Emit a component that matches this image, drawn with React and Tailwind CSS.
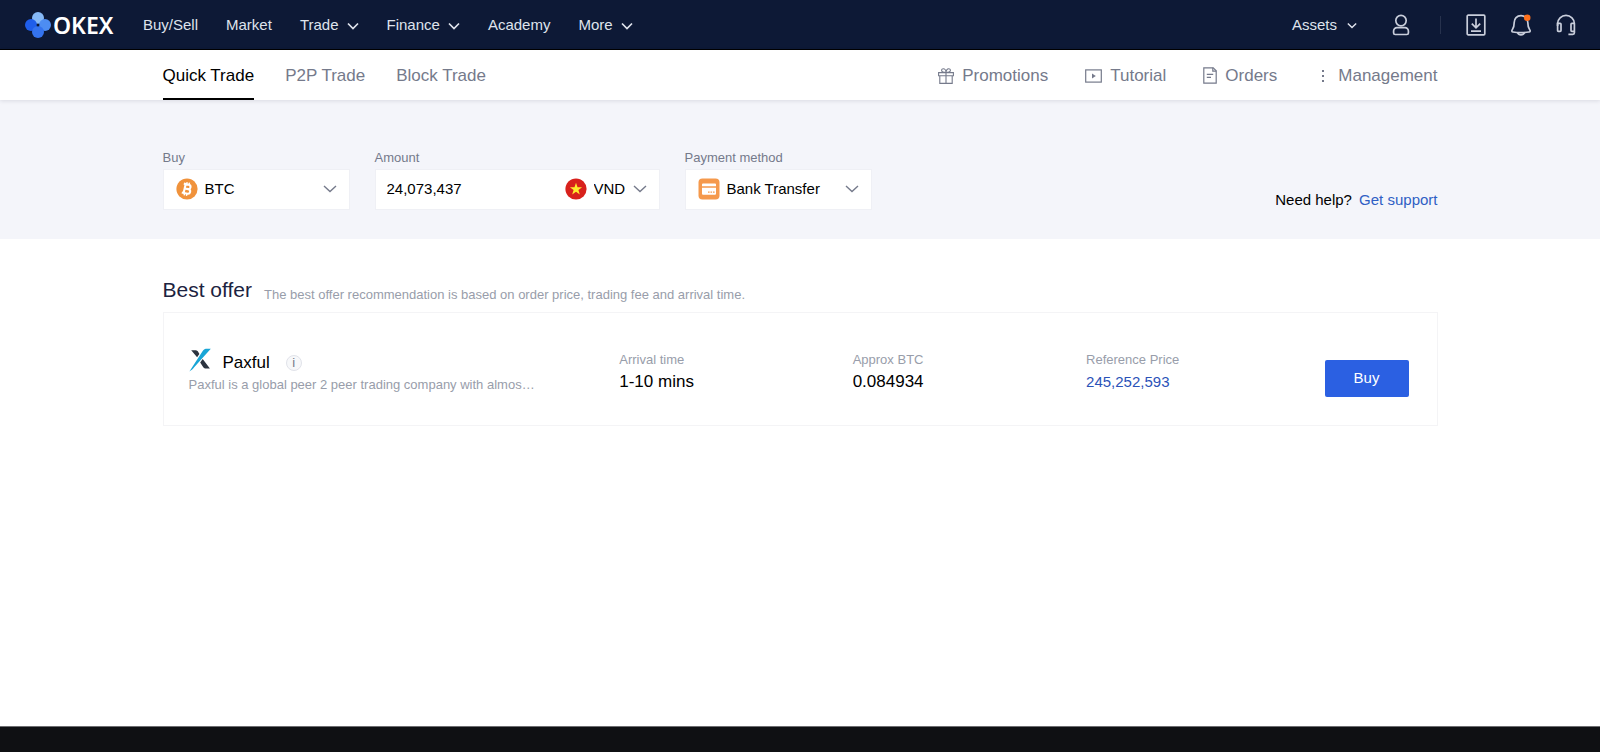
import { useState } from 'react'

const navLinks = [
  { label: 'Buy/Sell' },
  { label: 'Market' },
  { label: 'Trade', menu: true },
  { label: 'Finance', menu: true },
  { label: 'Academy' },
  { label: 'More', menu: true },
]

const tabs = ['Quick Trade', 'P2P Trade', 'Block Trade']

const Chevron = ({ className }) => (
  <svg viewBox="0 0 12 8" fill="none" stroke="currentColor" className={className} aria-hidden="true">
    <path d="M1 1.5l5 5 5-5" strokeWidth="1.7" />
  </svg>
)

// wider, flatter arrow used inside the form fields
const FieldChevron = () => (
  <svg
    viewBox="0 0 14 8"
    fill="none"
    stroke="currentColor"
    className="pointer-events-none absolute top-[15px] right-3 h-2 w-[14px] text-[#757a8b]"
    aria-hidden="true"
  >
    <path d="M1 1l6 5.500L13 1" strokeWidth="1.400" />
  </svg>
)

const Logo = () => (
  <svg viewBox="0 0 26 26" className="h-[26px] w-[26px]" aria-hidden="true">
    <circle cx="13" cy="6" r="6" fill="#86b9f6" />
    <circle cx="20" cy="13" r="6" fill="#4d8df2" />
    <circle cx="6" cy="13" r="6" fill="#1f5eea" />
    <circle cx="13" cy="20" r="6" fill="#3473ee" />
    <rect x="11.8" y="11.8" width="2.4" height="2.4" fill="#0d1936" transform="rotate(45 13 13)" />
  </svg>
)

const UserIcon = () => (
  <svg viewBox="0 0 18 22" fill="none" stroke="currentColor" strokeWidth="1.7" className="h-[22px] w-[18px]">
    <circle cx="9" cy="6.600" r="5.200" />
    <path d="M5 13.6h8a3.4 3.4 0 0 1 3.400 3.400v1.900a1.600 1.600 0 0 1-1.600 1.600H3.200a1.600 1.600 0 0 1-1.600-1.600V17A3.400 3.400 0 0 1 5 13.600z" />
  </svg>
)

const DownloadIcon = () => (
  <svg viewBox="0 0 20 22" fill="none" stroke="currentColor" strokeWidth="1.7" className="h-[22px] w-5">
    <rect x="1.2" y="1.2" width="17.6" height="19.6" rx="1" />
    <path d="M10 4.4v9.2M5.8 9.6l4.2 4.2 4.2-4.2M5 17.2h10" />
  </svg>
)

const BellIcon = () => (
  <svg viewBox="0 0 20 22" fill="none" stroke="currentColor" strokeWidth="1.7" className="h-[22px] w-5">
    <path d="M10 1.600c-4.200 0-6.800 3-6.800 6.800 0 3.400-.4 5.400-1.900 7.300-.8 1-.5 2.100.7 2.300 2.400.4 5.200.6 8 .6s5.600-.2 8-.6c1.200-.2 1.500-1.300.7-2.300-1.500-1.900-1.900-3.900-1.900-7.300 0-3.800-2.600-6.800-6.800-6.800z" />
    <path d="M6.400 18.400c.7 1.700 2 2.400 3.600 2.400s2.900-.7 3.600-2.400" />
    <circle cx="16.200" cy="3.700" r="3.300" fill="#ff6f1a" stroke="none" />
  </svg>
)

const HeadsetIcon = () => (
  <svg viewBox="0 0 20 22" fill="none" stroke="currentColor" strokeWidth="1.7" className="h-[22px] w-5">
    <path d="M1.600 12V9.600a8.400 8.200 0 0 1 16.800 0v9.200a1.600 1.600 0 0 1-1.600 1.600H12.400" />
    <path d="M1.600 9.400h2.600a.8.8 0 0 1 .8.8v6.400a.8.8 0 0 1-.8.8H2.400a.8.8 0 0 1-.8-.8zM18.400 9.400h-2.600a.8.8 0 0 0-.8.8v6.400a.8.8 0 0 0 .8.8h2.600" />
  </svg>
)

const GiftIcon = () => (
  <svg viewBox="0 0 16 16" fill="none" stroke="currentColor" strokeWidth="1.100" className="h-4 w-4">
    <path d="M.6 4.600h14.800v3.200H.6zM1.800 7.800h12.400v7.600H1.800zM8 4.600v10.800" />
    <path d="M8 4.400C6.600 4.400 3.600 4 3.600 2.300 3.600 1.200 4.400.7 5.300.7 6.800.7 8 2.600 8 4.400zM8 4.400c1.400 0 4.400-.4 4.400-2.100 0-1.100-.8-1.600-1.700-1.600C9.200.7 8 2.600 8 4.400z" />
  </svg>
)

const VideoIcon = () => (
  <svg viewBox="0 0 17 14" fill="none" stroke="currentColor" strokeWidth="1.200" className="h-[14px] w-[17px]">
    <rect x=".7" y=".9" width="15.600" height="12.200" />
    <path d="M7 4.600v4.800L10.800 7z" fill="currentColor" stroke="none" />
  </svg>
)

const OrderIcon = () => (
  <svg viewBox="0 0 14 17" fill="none" stroke="currentColor" strokeWidth="1.200" className="h-[17px] w-[14px]">
    <path d="M.8.800h9.400l3 3v12.400H.8zM3.800 7.400h6.400M3.800 10.400h4.200" />
    <path d="M9.800.800v3.400h3.400" />
  </svg>
)

const DotsIcon = () => (
  <svg viewBox="0 0 16 12" fill="currentColor" className="h-3 w-4">
    <rect x="8" y="0" width="2" height="2" />
    <rect x="8" y="5" width="2" height="2" />
    <rect x="8" y="10" width="2" height="2" />
  </svg>
)

const BtcIcon = () => (
  <svg viewBox="0 0 22 22" className="h-[22px] w-[22px]">
    <circle cx="11" cy="11" r="10.600" fill="#f0923b" />
    <g transform="rotate(13 11 11)" fill="none" stroke="#fff">
      <path d="M8.600 6.400v9.200M6.700 6.500h5.100a2.200 2.200 0 0 1 0 4.400H8.600M8.600 10.900h3.800a2.300 2.300 0 0 1 0 4.600H6.700" strokeWidth="2.100" />
      <path d="M9.600 4.200v2.200M12 4.200v2.200M9.600 15.600v2.200M12 15.600v2.200" strokeWidth="1.400" />
    </g>
  </svg>
)

const VndIcon = () => (
  <svg viewBox="0 0 22 22" className="h-[22px] w-[22px]">
    <circle cx="11" cy="11" r="10.600" fill="#d8211c" />
    <path d="M11 4.800l1.500 4.400h4.600l-3.700 2.700 1.400 4.500-3.800-2.700-3.800 2.700 1.400-4.500-3.700-2.700h4.600z" fill="#ffec2e" />
  </svg>
)

const BankIcon = () => (
  <svg viewBox="0 0 22 22" className="h-[22px] w-[22px]">
    <rect x=".5" y=".5" width="21" height="21" rx="4" fill="#f5994c" />
    <path d="M5 5.500h12a1 1 0 0 1 1 1v1.800H4V6.500a1 1 0 0 1 1-1zM4 9.800h14v6a1 1 0 0 1-1 1H5a1 1 0 0 1-1-1z" fill="#fff" />
    <path d="M10 14.200h1.600M12.500 14.200h1.600M15 14.200h1.600" stroke="#f5994c" strokeWidth="1.200" />
  </svg>
)

const PaxfulIcon = () => (
  <svg viewBox="0 0 22 24" className="h-6 w-[22px]">
    <path d="M2.200 2.200h4c1.400 0 2.200.5 2.900 1.500l1.300 2.300-2.300 3.300zM11.200 14.600l2.500-3.700 7.200 9.700h-3.600c-1.500 0-2.400-.5-3.200-1.700z" fill="#2b333f" />
    <path d="M21.800.8h-3.800c-2 0-3.200.6-4.300 2.200L.4 23.400c1.800-.8 3.400-2.200 5-4.300z" fill="#18a5d6" />
  </svg>
)

const subLinks = [
  { label: 'Promotions', icon: GiftIcon },
  { label: 'Tutorial', icon: VideoIcon },
  { label: 'Orders', icon: OrderIcon },
  { label: 'Management', icon: DotsIcon },
]

function Header() {
  return (
    <header className="flex h-[50px] items-center border-b border-black bg-[#0d1936] pr-6 pl-[25px] text-[15px] text-[#dfe3ec]">
      <a href="#" className="flex items-center gap-[2px] text-white" aria-label="OKEX home">
        <Logo />
        <span className="w-[60px] font-['Noto_Sans',sans-serif] text-[23px] leading-[22px] font-semibold">OKEX</span>
      </a>
      <nav className="ml-[30px] flex items-center gap-7 pt-[2px]">
        {navLinks.map((link) => (
          <a key={link.label} href="#" className="flex items-center gap-2">
            {link.label}
            {link.menu && <Chevron className="h-2 w-3" />}
          </a>
        ))}
      </nav>
      <div className="ml-auto flex items-center text-[#c9cedb]">
        <a href="#" className="flex items-center gap-[10px] pt-[2px] text-[#dfe3ec]">
          Assets
          <Chevron className="h-[7px] w-[10px]" />
        </a>
        <button type="button" aria-label="Account" className="ml-[35px]">
          <UserIcon />
        </button>
        <span className="mr-[25px] ml-[30px] h-[18px] w-px bg-[#27324d]" />
        <div className="flex items-center gap-[25px]">
          <button type="button" aria-label="Download"><DownloadIcon /></button>
          <button type="button" aria-label="Notifications"><BellIcon /></button>
          <button type="button" aria-label="Support"><HeadsetIcon /></button>
        </div>
      </div>
    </header>
  )
}

function SubNav() {
  const [active, setActive] = useState('Quick Trade')

  return (
    <div className="relative bg-white shadow-[0_1px_4px_rgba(30,35,60,0.12)]">
      <div className="mx-auto flex h-[50px] max-w-[1275px] items-stretch text-[17px] text-[#757a8b]">
        <nav className="flex gap-[31px]">
          {tabs.map((tab) => (
            <button
              key={tab}
              type="button"
              onClick={() => setActive(tab)}
              className={
                tab === active
                  ? 'border-y-2 border-t-transparent border-b-black pt-px text-black'
                  : 'border-y-2 border-transparent pt-px'
              }
            >
              {tab}
            </button>
          ))}
        </nav>
        <nav className="ml-auto flex items-center gap-[37px] pt-px">
          {subLinks.map(({ label, icon: Icon }) => (
            <a key={label} href="#" className="flex items-center gap-2">
              <Icon />
              {label}
            </a>
          ))}
        </nav>
      </div>
    </div>
  )
}

function SelectField({ id, label, icon, options }) {
  return (
    <div>
      <label htmlFor={id} className="block text-[13px] leading-[22px] text-[#757a8b]">{label}</label>
      <div className="relative h-[41px] w-[187px] border border-[#eff0f5] bg-white">
        <span className="pointer-events-none absolute top-2 left-3">{icon}</span>
        <select id={id} className="h-full w-full appearance-none bg-transparent pl-[41px] outline-none">
          {options.map((o) => (
            <option key={o}>{o}</option>
          ))}
        </select>
        <FieldChevron />
      </div>
    </div>
  )
}

function Filters() {
  const [amount, setAmount] = useState('24,073,437')

  return (
    <section className="bg-[#f4f5fa] pt-[47px] pb-[29px]">
      <div className="mx-auto flex max-w-[1275px] items-end text-[15px] text-black">
        <form className="flex gap-[25px]">
          <SelectField id="coin" label="Buy" icon={<BtcIcon />} options={['BTC', 'ETH', 'USDT']} />
          <div>
            <label htmlFor="amount" className="block text-[13px] leading-[22px] text-[#757a8b]">Amount</label>
            <div className="flex h-[41px] w-[285px] border border-[#eff0f5] bg-white">
              <input
                id="amount"
                value={amount}
                onChange={(e) => setAmount(e.target.value)}
                className="min-w-0 flex-1 pl-[11px] outline-none"
              />
              <div className="relative w-[94px]">
                <span className="pointer-events-none absolute top-2 left-0"><VndIcon /></span>
                <select aria-label="Currency" className="h-full w-full appearance-none bg-transparent pl-[29px] outline-none">
                  <option>VND</option>
                  <option>USD</option>
                </select>
                <FieldChevron />
              </div>
            </div>
          </div>
          <SelectField id="payment" label="Payment method" icon={<BankIcon />} options={['Bank Transfer', 'Credit Card']} />
        </form>
        <p className="ml-auto leading-5">
          Need help? <a href="#" className="ml-[3px] text-[#2f5fc4]">Get support</a>
        </p>
      </div>
    </section>
  )
}

function Offer() {
  return (
    <article className="grid grid-cols-[430fr_233fr_233fr_238fr_auto] border border-[#f4f4f6] pt-[35px] pr-7 pb-7 pl-[25px]">
      <div>
        <div className="flex h-[27px] items-end">
          <span className="flex h-full items-start"><PaxfulIcon /></span>
          <h3 className="ml-3 text-[17px] leading-6">Paxful</h3>
          <button
            type="button"
            aria-label="About Paxful"
            className="mb-1 ml-4 h-4 w-4 rounded-full border border-[#e1e3ea] bg-[#f7f8fa] text-[13px] leading-[14px] text-[#757a8b]"
          >
            i
          </button>
        </div>
        <p className="text-[13px] leading-5 text-[#989daa]">Paxful is a global peer 2 peer trading company with almos…</p>
      </div>
      <dl className="pt-[2px]">
        <dt className="text-[13px] leading-5 text-[#989daa]">Arrival time</dt>
        <dd className="text-[17px] leading-6">1-10 mins</dd>
      </dl>
      <dl className="pt-[2px]">
        <dt className="text-[13px] leading-5 text-[#989daa]">Approx BTC</dt>
        <dd className="text-[17px] leading-6">0.084934</dd>
      </dl>
      <dl className="pt-[2px]">
        <dt className="text-[13px] leading-5 text-[#989daa]">Reference Price</dt>
        <dd className="text-[15px] leading-6 text-[#2b52b8]">245,252,593</dd>
      </dl>
      <button type="button" className="mt-3 h-[37px] w-[84px] rounded-[2px] bg-[#2b60e2] text-[15px] text-white">
        Buy
      </button>
    </article>
  )
}

export default function App() {
  return (
    <div className="flex min-h-screen flex-col bg-white font-['Liberation_Sans',Arial,sans-serif] text-black">
      <Header />
      <SubNav />
      <Filters />
      <main className="mx-auto w-full max-w-[1275px] flex-1 pt-[37px]">
        <div className="mb-2 flex items-end gap-3">
          <h2 className="text-[21px] leading-7 text-[#1c2340]">Best offer</h2>
          <p className="text-[13px] leading-[18px] text-[#989daa]">
            The best offer recommendation is based on order price, trading fee and arrival time.
          </p>
        </div>
        <Offer />
      </main>
      <footer className="h-[26px] border-t border-[#6d6d70] bg-[#0f1013]" />
    </div>
  )
}
